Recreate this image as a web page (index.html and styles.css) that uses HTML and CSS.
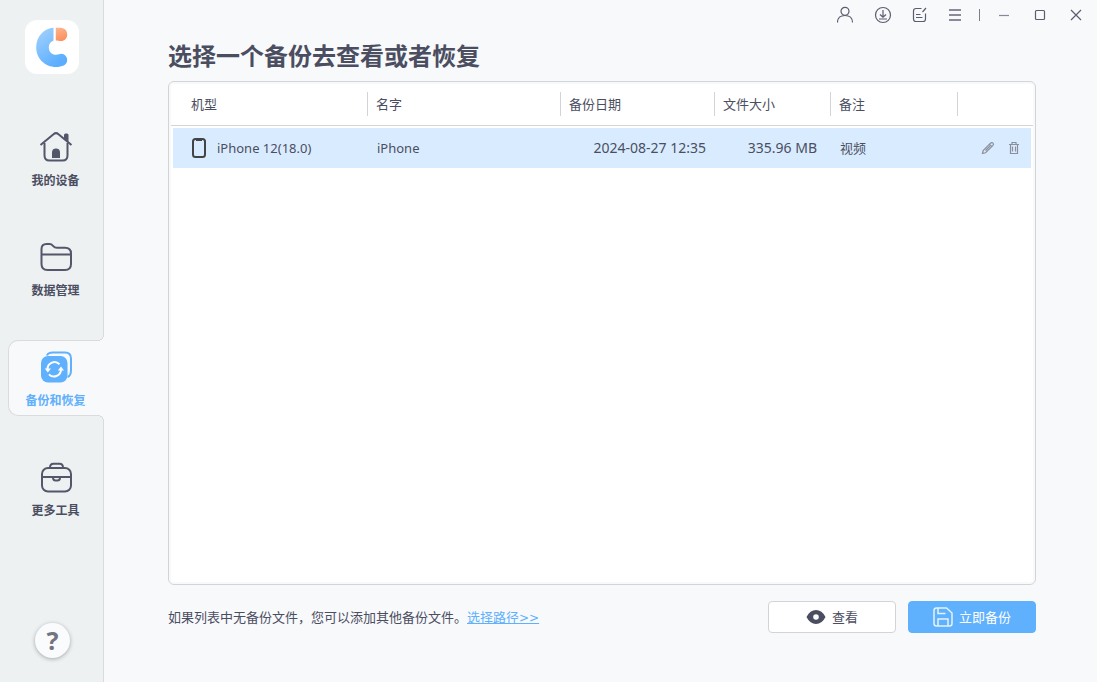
FILE: index.html
```html
<!DOCTYPE html>
<html lang="zh-CN">
<head>
<meta charset="utf-8">
<title>备份和恢复</title>
<link rel="stylesheet" href="styles.css">
</head>
<body class="app">
<aside class="sidebar">
  <div class="logo">
    <svg width="54" height="54" viewBox="0 0 54 54" aria-hidden="true">
      <defs>
        <linearGradient id="blue" x1="0" y1="0" x2="0.6" y2="1"><stop offset="0" stop-color="#a6d3fd"/><stop offset="1" stop-color="#5aadff"/></linearGradient>
        <linearGradient id="orange" x1="0" y1="0" x2="0.3" y2="1"><stop offset="0" stop-color="#fdb592"/><stop offset="1" stop-color="#fd905e"/></linearGradient>
      </defs>
      <path fill="url(#blue)" d="M28.500 7.800V20.500A7.300 7.300 0 0 0 23.800 27.500C23.800 32 27 34.800 31 34.800C33 34.800 34.500 33.800 36.500 33.800A6.200 6.200 0 0 1 42.200 40C42.200 45 37 47 31 47C20 47 11.200 38.500 11.200 27.500C11.200 16.500 19 8.200 28.500 7.800Z"/>
      <path fill="url(#orange)" d="M30.800 7.800H34C39.500 7.800 42.200 10.500 42.200 14.500C42.200 18.500 39.500 21 36 21C34 21 33 20.500 30.800 20.500Z"/>
    </svg>
  </div>
  <nav class="nav">
    <button class="nav-item" type="button">
      <svg width="34" height="32" viewBox="0 0 34 32" class="line-icon" aria-hidden="true">
        <path d="M1.500 14L14.500 3.200Q17 1 19.500 3.200L32.500 14"/>
        <path d="M5.500 12V24.500Q5.500 29.500 10.500 29.500H23.500Q28.500 29.500 28.500 24.500V12"/>
        <path class="solid" d="M25 8V4Q25 2.500 26.500 2.500H28Q29.500 2.500 29.500 4V11.500ZM13 27V21.500A4 4 0 0 1 21 21.500V27Z"/>
      </svg>
      <span>我的设备</span>
    </button>
    <button class="nav-item" type="button">
      <svg width="34" height="32" viewBox="0 0 34 32" class="line-icon" aria-hidden="true">
        <path d="M2.500 8Q2.500 3 7.500 3H10.500Q12.500 3 14 4.800Q15.700 6.800 18 6.800H26Q32 6.800 32 12.500V23Q32 29 26 29H8.500Q2.500 29 2.500 23ZM2.500 13.500H32"/>
      </svg>
      <span>数据管理</span>
    </button>
    <button class="nav-item active" type="button" aria-current="page">
      <svg width="34" height="32" viewBox="0 0 34 32" aria-hidden="true">
        <path fill="none" stroke="#5fb0fd" stroke-width="2" d="M8 4.500Q9 1.500 14 1.500H26Q32 1.500 32 7.500V19Q32 25 28.500 26"/>
        <rect x="2" y="5" width="26.500" height="26.500" rx="7" fill="#5fb0fd"/>
        <path fill="none" stroke="#fff" stroke-width="2" d="M8.500 18A7 7 0 0 1 20.500 13.200M22 18.800A7 7 0 0 1 10 23.400"/>
        <path fill="#fff" d="M5.800 17.500H12L8.800 21.500ZM18.800 19.500L22 15.500L25 19.500Z"/>
      </svg>
      <span>备份和恢复</span>
    </button>
    <button class="nav-item" type="button">
      <svg width="34" height="32" viewBox="0 0 34 32" class="line-icon" aria-hidden="true">
        <rect x="3" y="7" width="29" height="23.500" rx="6"/>
        <path d="M11 6.500Q11 2.800 14.500 2.800H20.500Q24 2.800 24 6.500M3 16H32M14 16.500Q14 19.500 16.500 19.500H18.500Q21 19.500 21 16.500"/>
      </svg>
      <span>更多工具</span>
    </button>
  </nav>
  <button class="help" type="button" aria-label="帮助">?</button>
</aside>

<div class="content">
  <header class="titlebar">
    <div class="tools">
      <button class="tool" type="button" aria-label="账户"><svg width="20" height="20" viewBox="0 0 20 20"><circle cx="8" cy="6.300" r="4"/><path d="M.5 17.500C.5 13 3.500 10.500 8 10.500S15.500 13 15.500 17.500"/></svg></button>
      <button class="tool" type="button" aria-label="下载"><svg width="20" height="20" viewBox="0 0 20 20"><circle cx="10" cy="10" r="7.500"/><path d="M10 5V12M7 9.500L10 12.300L13 9.500M6 14H14"/></svg></button>
      <button class="tool" type="button" aria-label="反馈"><svg width="20" height="20" viewBox="0 0 20 20"><path d="M12.500 3.500H7Q4.500 3.500 4.500 6V14Q4.500 16.500 7 16.500H14Q16.500 16.500 16.500 14V8.500M7 9.500H11.500M7 12.500H13.500M13.500 7L17 3"/></svg></button>
      <button class="tool menu" type="button" aria-label="菜单"><svg width="20" height="20" viewBox="0 0 20 20"><path d="M4 5H16M4 10H16M4 15H16"/></svg></button>
    </div>
    <span class="divider"></span>
    <div class="tools">
      <button class="tool" type="button" aria-label="最小化"><svg width="20" height="20" viewBox="0 0 20 20"><path stroke="#85879a" d="M5 10.500H15"/></svg></button>
      <button class="tool" type="button" aria-label="最大化"><svg width="20" height="20" viewBox="0 0 20 20"><rect x="5.500" y="5.500" width="9" height="9" rx="1"/></svg></button>
      <button class="tool" type="button" aria-label="关闭"><svg width="20" height="20" viewBox="0 0 20 20"><path d="M5 5L15 15M15 5L5 15"/></svg></button>
    </div>
  </header>

  <main class="main">
    <h1 class="title">选择一个备份去查看或者恢复</h1>
    <section class="panel">
      <table class="backups">
        <colgroup><col class="col-model"><col><col class="col-date"><col class="col-size"><col class="col-note"><col class="col-actions"></colgroup>
        <thead>
          <tr><th><span>机型</span></th><th><span>名字</span></th><th><span>备份日期</span></th><th><span>文件大小</span></th><th><span>备注</span></th><th></th></tr>
        </thead>
        <tbody>
          <tr>
            <td><div class="model"><svg width="14" height="20" viewBox="0 0 14 20" aria-hidden="true"><rect x="1" y="1" width="12" height="18" rx="2.500" fill="none" stroke="#444" stroke-width="2"/><path d="M4 1.500H10V3H4Z" fill="#444"/></svg>iPhone 12(18.0)</div></td>
            <td>iPhone</td>
            <td class="date">2024-08-27 12:35</td>
            <td class="size">335.96 MB</td>
            <td>视频</td>
            <td><div class="actions">
              <button class="action" type="button" aria-label="编辑"><svg width="14" height="14" viewBox="0 0 14 14"><path d="M1.500 12.500L2.200 9.500L9.500 2.200Q10.800 1 12 2.200Q13 3.300 11.800 4.600L4.500 11.800ZM8.500 3.300L10.700 5.500M4.500 9.500L9 5"/></svg></button>
              <button class="action" type="button" aria-label="删除"><svg width="14" height="14" viewBox="0 0 14 14"><path d="M2 3.500H12M5 3V1.500H9V3M3.500 3.500V12.500H10.500V3.500M5.500 5.500V10.500M8.500 5.500V10.500"/></svg></button>
            </div></td>
          </tr>
        </tbody>
      </table>
    </section>
    <footer class="footer">
      <p class="hint">如果列表中无备份文件，您可以添加其他备份文件。<a class="path-link" href="#">选择路径<span class="arrows">&gt;&gt;</span></a></p>
      <div class="buttons">
        <button class="btn" type="button"><svg width="20" height="16" viewBox="0 0 20 16" aria-hidden="true"><path fill="#4b4e61" fill-rule="evenodd" d="M.5 8Q4 1 10 1T19.500 8Q16 15 10 15T.5 8ZM10 5.200A2.800 2.800 0 1 0 10 10.800A2.800 2.800 0 1 0 10 5.200Z"/></svg>查看</button>
        <button class="btn primary" type="button"><svg width="20" height="20" viewBox="0 0 20 20" fill="none" stroke="#e4f2ff" stroke-width="1.500" aria-hidden="true"><path d="M1 3.500Q1 1 3.500 1H13.500L19 6V16.500Q19 19 16.500 19H3.500Q1 19 1 16.500ZM5 1V6.500H12.500M5 19V12H15V19"/></svg>立即备份</button>
      </div>
    </footer>
  </main>
</div>
</body>
</html>
```

FILE: styles.css
```css
* { box-sizing: border-box; }

.app {
  margin: 0;
  min-height: 100vh;
  display: flex;
  background: #f8f9fb;
  color: #4b4e61;
  font: 13px/20px "Noto Sans CJK SC", sans-serif;
}

button {
  padding: 0;
  border: 0;
  background: none;
  color: inherit;
  font: inherit;
  cursor: pointer;
}

svg { display: block; flex: none; }

/* Sidebar */
.sidebar {
  width: 104px;
  flex: none;
  display: flex;
  flex-direction: column;
  padding: 20px 0 24px;
  background: #edf1f2;
  border-right: 1px solid #d9dbdd;
}

.logo {
  width: 54px;
  height: 54px;
  margin: 0 0 46px 25px;
  border-radius: 12px;
  background: #fff;
}

.nav {
  display: flex;
  flex-direction: column;
  gap: 34px;
  margin: 0 -1px 0 8px;
}

.nav-item {
  position: relative;
  display: flex;
  flex-direction: column;
  align-items: center;
  gap: 9px;
  height: 76px;
  padding: 10px 2px 0 0;
  border: 1px solid transparent;
  border-right: 0;
  border-radius: 10px 0 0 10px;
  font-size: 12px;
  font-weight: 700;
  line-height: 16px;
}

.nav-item.active {
  background: #f8f9fb;
  border-color: #d9dbdd;
  color: #5fb0fd;
}

.active::before,
.active::after {
  content: "";
  position: absolute;
  right: 0;
  width: 6px;
  height: 6px;
}

.active::before {
  top: -6px;
  background: radial-gradient(circle at 0 0, #edf1f2 5px, #d9dbdd 5px 6px, #f8f9fb 6px);
}

.active::after {
  bottom: -6px;
  background: radial-gradient(circle at 0 100%, #edf1f2 5px, #d9dbdd 5px 6px, #f8f9fb 6px);
}

.line-icon { fill: none; stroke: #54576a; stroke-width: 2; }
.line-icon .solid { fill: #54576a; stroke: none; }

.help {
  width: 35px;
  height: 35px;
  margin: auto 0 0 35px;
  border-radius: 50%;
  background: #fafbfc;
  box-shadow: 0 1px 4px rgba(0, 0, 0, 0.3);
  color: #72747f;
  font: 700 25px/35px "Noto Sans", sans-serif;
}

/* Window bar */
.content {
  flex: 1;
  min-width: 0;
  display: flex;
  flex-direction: column;
}

.titlebar {
  height: 30px;
  display: flex;
  align-items: center;
  justify-content: flex-end;
  padding-right: 11px;
}

.tools { display: flex; gap: 16px; }

.tool {
  width: 20px;
  height: 20px;
  fill: none;
  stroke: #5a5d70;
  stroke-width: 1.2;
}

.tool.menu {
  stroke: #898b9a;
  stroke-width: 2;
}

.divider {
  width: 1px;
  height: 12px;
  margin: 0 14px;
  background: #7c7e8c;
}

/* Main area */
.main {
  flex: 1;
  display: flex;
  flex-direction: column;
  padding: 0 61px 49px 64px;
}

.title {
  margin: 0;
  padding-bottom: 2px;
  font-size: 24px;
  line-height: 49px;
  font-weight: 700;
}

.panel {
  flex: 1;
  padding: 0 2px;
  border: 1px solid #d2d4d7;
  border-radius: 6px;
  background: #fff;
  box-shadow: inset 0 0 0 2px #f8f9fb;
}

.backups {
  width: 100%;
  table-layout: fixed;
  border-spacing: 0;
}

.col-model { width: 197px; }
.col-date { width: 154px; }
.col-size { width: 116px; }
.col-note { width: 127px; }
.col-actions { width: 75px; }

.backups th {
  height: 44px;
  padding: 0;
  border-bottom: 1px solid #d2d4d7;
  font-weight: 400;
  text-align: left;
}

.backups th span {
  display: block;
  padding-left: 8px;
  border-right: 1px solid #d2d4d7;
  line-height: 24px;
}

.backups th:first-child span { padding-left: 20px; }

.backups td {
  height: 42px;
  padding: 0 0 0 9px;
  border-top: 2px solid #fff;
  background: #d9ecff;
  font-family: "Noto Sans", "Noto Sans CJK SC", sans-serif;
}

.backups td:first-child {
  padding-left: 19px;
  border-left: 2px solid #fff;
}

.backups td:last-child { border-right: 2px solid #fff; }

.backups .date { padding-right: 9px; text-align: right; font-size: 14px; }
.backups .size { padding-right: 14px; text-align: right; font-size: 14px; }

.model { display: flex; align-items: center; gap: 11px; }

.actions {
  display: flex;
  justify-content: flex-end;
  gap: 12px;
  padding-right: 10px;
}

.action {
  fill: none;
  stroke: #8b8e9b;
  stroke-width: 1.2;
}

/* Footer */
.footer {
  display: flex;
  align-items: center;
  justify-content: space-between;
  margin-top: 16px;
}

.hint { margin: 0; }
.path-link { color: #5fb0fd; }
.arrows { font-family: "DejaVu Sans", sans-serif; font-size: 12px; }

.buttons { display: flex; gap: 12px; }

.btn {
  width: 128px;
  height: 32px;
  display: flex;
  align-items: center;
  justify-content: center;
  gap: 6px;
  border: 1px solid #d2d4d7;
  border-radius: 4px;
  background: #fff;
}

.btn.primary {
  border-color: #5fb0fd;
  background: #5fb0fd;
  color: #fff;
}
```
